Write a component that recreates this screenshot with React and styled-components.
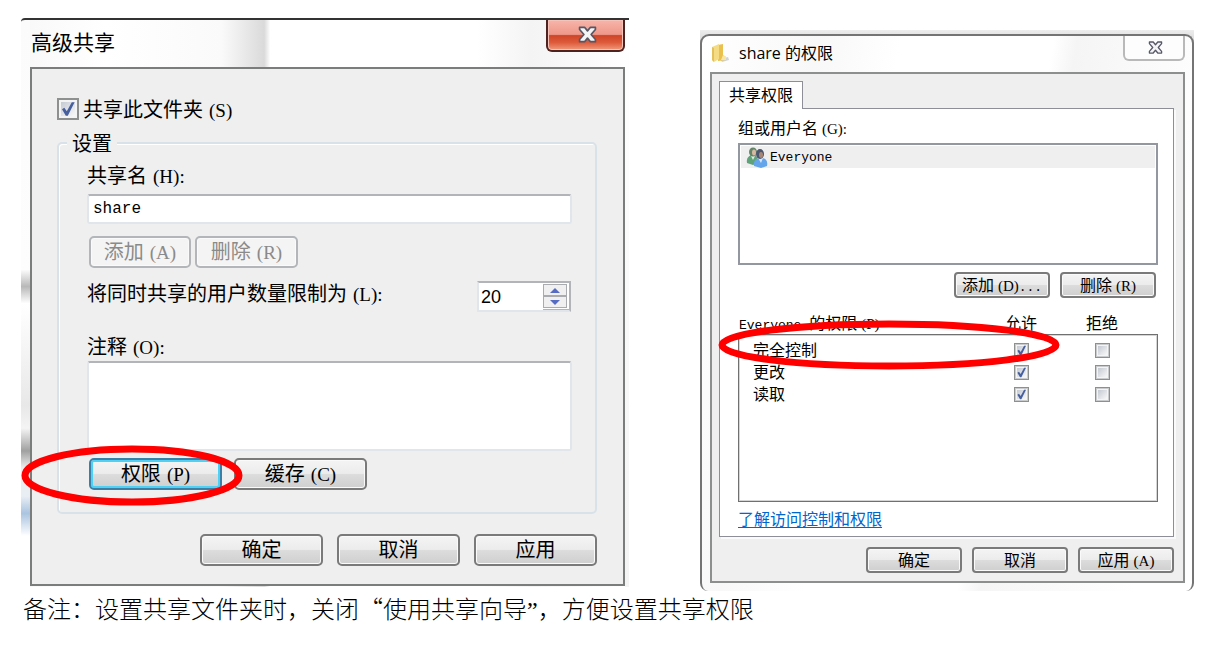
import React from "react";
import styled, { createGlobalStyle, css } from "styled-components";

const cjk = '"Noto Sans CJK SC", sans-serif';

const GlobalStyle = createGlobalStyle`
  *, *::before, *::after { box-sizing: border-box; }
  body { margin: 0; background: #fff; color: #000; font: 20px/24px ${cjk}; }
  button, input, textarea { font: inherit; color: inherit; margin: 0; }
`;

const Page = styled.main`
  padding: 18px 29px 24px 21px;
`;

const Dialogs = styled.div`
  display: grid;
  grid-template-columns: 608fr 494fr;
  column-gap: 71px;
  align-items: start;
`;

const Note = styled.p`
  margin: 2px 0 0;
  padding-left: 2px;
  font-size: 24px;
  line-height: 30px;
  font-weight: 300;
`;

const ClosingQuote = styled.span`
  font-family: "Liberation Serif", serif;
  line-height: 1;
`;

/* Access key after a label, e.g. (S) */
const Key = styled.span`
  margin-left: ${(p) => (p.$small ? 4 : 6)}px;
  font-family: "Liberation Serif", serif;
  font-size: ${(p) => (p.$small ? 15 : 19)}px;
  font-weight: 400;
  line-height: 1;
`;

const Mono = styled.span`
  font-family: "Liberation Mono", monospace;
  font-size: 13px;
  line-height: 1;
`;

/* ---------- window frames ---------- */

const ShareWindow = styled.section`
  padding: 0 4px 1px 9px;
  border-top: 2px solid #333;
  border-top-left-radius: 4px;
  background:
    linear-gradient(#fff, #f4f4f4) right / 4px 100% no-repeat,
    linear-gradient(
      #fbfbfb 0, #fdfdfd 44%, #b8b8b8 47%, #fff 50%, #e8e8e8 68%,
      #f4f4f4 72%, #a0a0a0 76%, #eee 79%, #e8eef4 84%, #aac4e0 87%, #fff 91%, #fff 100%
    ) left / 9px 100% no-repeat,
    linear-gradient(90deg, #f8f8f8 0, #fff 14%, #fafafa 33%, #e8e8e8 37%, #dadada 40%, #fff 41%, #fff 75%, #f4f4f4 84%, #fff 100%);
`;

const ShareTitleBar = styled.header`
  display: flex;
  justify-content: space-between;
  align-items: flex-start;
  height: 47px;
`;

const ShareTitle = styled.h1`
  margin: 9px 0 0 1px;
  font-size: 21px;
  line-height: 24px;
  font-weight: 400;
`;

const CloseRed = styled.button`
  display: grid;
  place-items: center;
  width: 79px;
  height: 32px;
  padding: 0 0 1px 3px;
  border: 2px solid #4c2320;
  border-top: 0;
  border-radius: 0 0 6px 6px;
  background: linear-gradient(#f7b5aa 0, #ee9789 48%, #cf4427 52%, #dd5a3b 75%, #f09a7c 100%);
  box-shadow: inset 0 0 0 1px #f7c3b8;
`;

const SharePanel = styled.div`
  padding: 28px 26px 18px 25px;
  border: 2px solid #7b7d7c;
  background: #efefef;
`;

const PermWindow = styled.section`
  margin-top: 12px;
  padding-top: 4px;
  background: linear-gradient(#ededed, #d8d8d8) top / 100% 12px no-repeat;
`;

const PermFrame = styled.div`
  padding: 0 7px 8px 8px;
  border: 2px solid #747474;
  border-bottom: 0;
  border-radius: 9px 9px 8px 8px;
  background: linear-gradient(100deg, #fff 0, #f8f8f8 20%, #fff 34%, #fff 60%, #f5f5f5 64%, #fff 90%);
`;

const PermTitleBar = styled.header`
  display: flex;
  align-items: flex-start;
  height: 36px;
`;

const PermTitle = styled.h2`
  flex: 1;
  margin: 5px 0 0 9px;
  font: 400 16px/24px "Open Sans", ${cjk};
`;

const TitleIcon = styled.span`
  display: flex;
  margin: 7px 0 0 1px;
`;

const ClosePlain = styled.button`
  display: grid;
  place-items: center;
  width: 62px;
  height: 25px;
  padding: 0 0 1px 3px;
  border: 2px solid #b9b9b9;
  border-top: 0;
  border-radius: 0 0 6px 6px;
  background: #fdfdfd;
`;

const PermPanel = styled.div`
  padding: 7px 9px 8px 7px;
  border: 2px solid #8d8f8e;
  background: #efefef;
  font-size: 16px;
`;

/* ---------- controls ---------- */

const PushButton = styled.button`
  width: ${(p) => p.$width}px;
  height: 32px;
  padding: 0 0 2px;
  border: 2px solid #7a7a7a;
  border-radius: 5px;
  background: linear-gradient(#f4f4f4 0, #ececec 48%, #dcdcdc 52%, #cfcfcf 100%);
  box-shadow: inset 0 0 0 1px #fafafa;
  white-space: nowrap;
  line-height: 24px;
  ${(p) => p.$compact && css`
    height: 26px;
    font-size: 16px;
    line-height: 20px;
    border-radius: 4px;
  `}
  ${(p) => p.$focused && css`
    border-color: #3b7fa6;
    box-shadow: inset 0 0 0 2px #4fd0f5;
  `}
  &:disabled {
    color: #8a8a8a;
    border-color: #b2b6b9;
    background: #f4f4f4;
  }
`;

const ButtonRow = styled.div`
  display: flex;
  justify-content: ${(p) => (p.$end ? "flex-end" : "flex-start")};
  gap: ${(p) => p.$gap}px;
  margin-top: ${(p) => p.$top}px;
  padding: 0 ${(p) => p.$inset || 0}px;
`;

const CheckFrame = styled.span`
  display: inline-grid;
  width: ${(p) => p.$size}px;
  height: ${(p) => p.$size}px;
  > * { grid-area: 1 / 1; }
  svg { width: 100%; height: 100%; pointer-events: none; z-index: 1; }
`;

const CheckInput = styled.input`
  appearance: none;
  width: 100%;
  height: 100%;
  border: ${(p) => (p.$size > 18 ? 2 : 1)}px solid #8e8f8f;
  background: linear-gradient(135deg, #c4c9d2, #f8f8f8) content-box, #f4f4f4;
  padding: 2px;
  box-shadow: ${(p) => (p.$size > 18 ? "none" : "inset 0 0 0 1px #c9cbcd")};
`;

const CheckLabel = styled.label`
  display: flex;
  align-items: center;
  gap: 4px;
  height: 24px;
`;

const Settings = styled.fieldset`
  min-width: 0;
  margin: 10px 0 0;
  padding: 8px 23px 22px 28px;
  border: 2px solid #d9e2e8;
  border-radius: 5px;
  box-shadow: inset 1px 1px 0 #fff;
  legend {
    margin-left: -20px;
    padding: 0 5px;
    background: #efefef;
  }
`;

const FieldLabel = styled.label`
  display: block;
  height: 24px;
  margin-top: ${(p) => p.$top || 0}px;
`;

const fieldBox = css`
  display: block;
  width: 100%;
  border: 2px solid #e1e5ec;
  border-top-color: #b3b4ba;
  border-radius: 3px;
  background: #fff;
`;

const NameInput = styled.input`
  ${fieldBox}
  height: 30px;
  margin-top: 7px;
  padding: 0 4px;
  font-family: "Liberation Mono", monospace;
  font-size: 16px;
`;

const CommentBox = styled.textarea`
  ${fieldBox}
  height: 90px;
  margin-top: 3px;
  resize: none;
`;

const LimitRow = styled.div`
  display: flex;
  justify-content: space-between;
  align-items: flex-start;
  margin-top: 13px;
`;

const Spinner = styled.span`
  display: flex;
  width: 94px;
  height: 31px;
  margin-right: 1px;
  border: 2px solid #e1e5ec;
  border-top-color: #b3b4ba;
  border-right-color: #b3b4ba;
  background: #fff;
`;

const SpinInput = styled.input`
  flex: 1;
  min-width: 0;
  padding: 0 2px;
  border: 0;
  background: none;
  font-family: "Liberation Sans", sans-serif;
  font-size: 18px;
`;

const SpinButtons = styled.span`
  display: grid;
  grid-template-rows: 1fr 1fr;
  width: 26px;
  padding: 1px 2px 1px 0;
  border-bottom: 1px solid #b3b4ba;
`;

const SpinButton = styled.button`
  display: grid;
  place-items: center;
  padding: 0;
  border: 1px solid #a9abaf;
  background: #f0f0f0;
`;

/* Red ring drawn over the control that matters */
const RingSvg = styled.svg`
  position: absolute;
  overflow: visible;
  pointer-events: none;
  z-index: 2;
`;

const CircledButton = styled.span`
  position: relative;
  display: flex;
  ${RingSvg} { top: -9px; left: -64px; width: 214px; height: 53px; }
`;

const CircledTable = styled.div`
  position: relative;
  margin-top: 14px;
  ${RingSvg} { top: 12px; left: -16px; width: calc(100% - 86px); height: 42px; }
`;

/* ---------- permissions tab ---------- */

const Tab = styled.button`
  display: block;
  position: relative;
  z-index: 1;
  width: 84px;
  height: 28px;
  margin-bottom: -1px;
  padding: 0 0 3px;
  border: 1px solid #8c8f98;
  border-bottom: 0;
  background: #fff;
  line-height: 24px;
`;

const TabPanel = styled.div`
  padding: 6px 15px 6px 18px;
  border: 1px solid #8c8f98;
  box-shadow: 2px 2px 0 #fafafa;
  background: #fff;
`;

const ListCaption = styled.div`
  height: 24px;
`;

const PrincipalList = styled.ul`
  height: 122px;
  margin: 4px 0 0;
  padding: 1px;
  border: 2px solid #93979f;
  list-style: none;
  background: #fff;
`;

const Principal = styled.li`
  display: flex;
  align-items: center;
  gap: 2px;
  height: 22px;
  padding-left: 5px;
  background: #efefef;
`;

const PermTable = styled.table`
  display: block;
  line-height: 20px;
  thead, tbody { display: block; }
  thead { padding: 0 1px; }
  tr {
    display: grid;
    grid-template-columns: 1fr 52px 110px;
    height: 22px;
  }
  th, td { padding: 0; font-weight: 400; text-align: center; white-space: nowrap; }
  td { display: grid; place-items: center; }
  th:first-child { text-align: left; }
  tbody {
    height: 168px;
    padding-top: 4px;
    border: 1px solid #707070;
    box-shadow: inset 0 0 0 1px #d5d5d5;
  }
  tbody th { padding-left: 14px; }
`;

const HelpLink = styled.a`
  display: block;
  width: max-content;
  margin-top: 4px;
  color: #0066cc;
  text-decoration: underline;
  text-underline-offset: 2px;
`;

/* ---------- drawings ---------- */

const Ring = () => (
  <RingSvg aria-hidden="true">
    <ellipse cx="50%" cy="50%" rx="50%" ry="50%" fill="none" stroke="#fe0000" strokeWidth="7" />
  </RingSvg>
);

const CloseGlyph = ({ width, height }) => (
  <svg width={width} height={height} viewBox="0 0 18 16" aria-hidden="true">
    <path
      d="M1.5 1.2H6.2L9 4.6 11.8 1.2H16.5V3.2L12.4 8 16.5 12.8V14.8H11.8L9 11.4 6.2 14.8H1.5V12.8L5.6 8 1.5 3.2Z"
      fill="#f4f4f4"
      stroke="#555766"
      strokeWidth="1.6"
      strokeLinejoin="round"
    />
  </svg>
);

const FolderGlyph = () => (
  <svg width="19" height="20" viewBox="0 0 19 20" aria-hidden="true">
    <path d="M9 16L17 14 18 17 11 19Z" fill="#d0d4d6" />
    <path d="M7 2L12 1V12L15 14V17L7 18Z" fill="#eac14e" />
    <path d="M1 4L8 1V16L3 19 1 17Z" fill="#f5dc84" />
    <path d="M1 4L3 5V19L1 17Z" fill="#e2c05c" />
    <path d="M12 12L15 14V17L10 17Z" fill="#f8e7a4" />
  </svg>
);

const UsersGlyph = () => (
  <svg width="22" height="21" viewBox="0 0 22 21" aria-hidden="true">
    <path d="M1 16C0 11 3 8 7 8S12 11 12 16L7 18Z" fill="#5fa27a" />
    <path d="M5 9L7 13 9 9Z" fill="#dcefe2" />
    <ellipse cx="7" cy="5" rx="4" ry="4.5" fill="#62856a" />
    <ellipse cx="8" cy="5.5" rx="2" ry="3" fill="#d5b9a0" />
    <path d="M8 19C7 14 10 11 15 11S22 14 21 19L15 21Z" fill="#64a4ea" />
    <path d="M12 11L15 16 17 11Z" fill="#d5e6f8" />
    <ellipse cx="14" cy="7" rx="4" ry="5" fill="#4c566e" />
    <ellipse cx="15" cy="8" rx="2" ry="3" fill="#a98775" />
  </svg>
);

function CheckBox({ size, ...rest }) {
  return (
    <CheckFrame $size={size}>
      <CheckInput type="checkbox" $size={size} {...rest} />
      {rest.defaultChecked && (
        <svg viewBox="0 0 22 22" aria-hidden="true">
          <path d="M5 11.2L7.3 9.8 9.8 13.2 14.8 4.2H17.6L10.8 17.8H8.8Z" fill="#465f9e" />
        </svg>
      )}
    </CheckFrame>
  );
}

const SpinArrow = ({ down }) => (
  <svg width="10" height="5" viewBox="0 0 10 5" aria-hidden="true">
    <path d={down ? "M0 0H10L5 5Z" : "M0 5H10L5 0Z"} fill="#566cc4" />
  </svg>
);

const permissions = [
  { name: "完全控制", allow: true },
  { name: "更改", allow: true },
  { name: "读取", allow: true },
];

function AdvancedSharing() {
  return (
    <ShareWindow>
      <ShareTitleBar>
        <ShareTitle>高级共享</ShareTitle>
        <CloseRed type="button" aria-label="关闭">
          <CloseGlyph width={19} height={17} />
        </CloseRed>
      </ShareTitleBar>
      <SharePanel>
        <CheckLabel>
          <CheckBox size={22} defaultChecked />
          <span>共享此文件夹<Key>(S)</Key></span>
        </CheckLabel>
        <Settings>
          <legend>设置</legend>
          <FieldLabel htmlFor="share-name">共享名<Key>(H):</Key></FieldLabel>
          <NameInput id="share-name" defaultValue="share" />
          <ButtonRow $gap={4} $top={12} $inset={2}>
            <PushButton type="button" $width={102} disabled>添加<Key>(A)</Key></PushButton>
            <PushButton type="button" $width={103} disabled>删除<Key>(R)</Key></PushButton>
          </ButtonRow>
          <LimitRow>
            <FieldLabel htmlFor="user-limit">将同时共享的用户数量限制为<Key>(L):</Key></FieldLabel>
            <Spinner>
              <SpinInput id="user-limit" defaultValue="20" />
              <SpinButtons>
                <SpinButton type="button" aria-label="增加"><SpinArrow /></SpinButton>
                <SpinButton type="button" aria-label="减少"><SpinArrow down /></SpinButton>
              </SpinButtons>
            </Spinner>
          </LimitRow>
          <FieldLabel htmlFor="comment" $top={22}>注释<Key>(O):</Key></FieldLabel>
          <CommentBox id="comment" />
          <ButtonRow $gap={12} $top={7} $inset={2}>
            <CircledButton>
              <PushButton type="button" $width={133} $focused>权限<Key>(P)</Key></PushButton>
              <Ring />
            </CircledButton>
            <PushButton type="button" $width={133}>缓存<Key>(C)</Key></PushButton>
          </ButtonRow>
        </Settings>
        <ButtonRow $gap={14} $top={20} $end>
          <PushButton type="button" $width={123}>确定</PushButton>
          <PushButton type="button" $width={123}>取消</PushButton>
          <PushButton type="button" $width={123}>应用</PushButton>
        </ButtonRow>
      </SharePanel>
    </ShareWindow>
  );
}

function SharePermissions() {
  return (
    <PermWindow>
      <PermFrame>
        <PermTitleBar>
          <TitleIcon><FolderGlyph /></TitleIcon>
          <PermTitle>share 的权限</PermTitle>
          <ClosePlain type="button" aria-label="关闭">
            <CloseGlyph width={15} height={13} />
          </ClosePlain>
        </PermTitleBar>
        <PermPanel>
          <Tab type="button">共享权限</Tab>
          <TabPanel>
            <ListCaption id="principals">组或用户名<Key $small>(G):</Key></ListCaption>
            <PrincipalList aria-labelledby="principals">
              <Principal><UsersGlyph /><Mono>Everyone</Mono></Principal>
            </PrincipalList>
            <ButtonRow $gap={10} $top={7} $inset={2} $end>
              <PushButton type="button" $width={96} $compact>
                添加<Key $small>(D)</Key><Mono>...</Mono>
              </PushButton>
              <PushButton type="button" $width={96} $compact>删除<Key $small>(R)</Key></PushButton>
            </ButtonRow>
            <CircledTable>
              <PermTable>
                <thead>
                  <tr>
                    <th scope="col"><Mono>Everyone </Mono>的权限<Key $small>(P)</Key></th>
                    <th scope="col">允许</th>
                    <th scope="col">拒绝</th>
                  </tr>
                </thead>
                <tbody>
                  {permissions.map((p) => (
                    <tr key={p.name}>
                      <th scope="row">{p.name}</th>
                      <td><CheckBox size={15} aria-label={p.name + " 允许"} defaultChecked={p.allow} /></td>
                      <td><CheckBox size={15} aria-label={p.name + " 拒绝"} /></td>
                    </tr>
                  ))}
                </tbody>
              </PermTable>
              <Ring />
            </CircledTable>
            <HelpLink href="#help">了解访问控制和权限</HelpLink>
          </TabPanel>
          <ButtonRow $gap={10} $top={10} $end>
            <PushButton type="button" $width={96} $compact>确定</PushButton>
            <PushButton type="button" $width={96} $compact>取消</PushButton>
            <PushButton type="button" $width={96} $compact>应用<Key $small>(A)</Key></PushButton>
          </ButtonRow>
        </PermPanel>
      </PermFrame>
    </PermWindow>
  );
}

export default function App() {
  return (
    <Page lang="zh-CN">
      <GlobalStyle />
      <Dialogs>
        <AdvancedSharing />
        <SharePermissions />
      </Dialogs>
      <Note>
        备注：设置共享文件夹时，关闭“使用共享向导<ClosingQuote>”</ClosingQuote>，方便设置共享权限
      </Note>
    </Page>
  );
}
